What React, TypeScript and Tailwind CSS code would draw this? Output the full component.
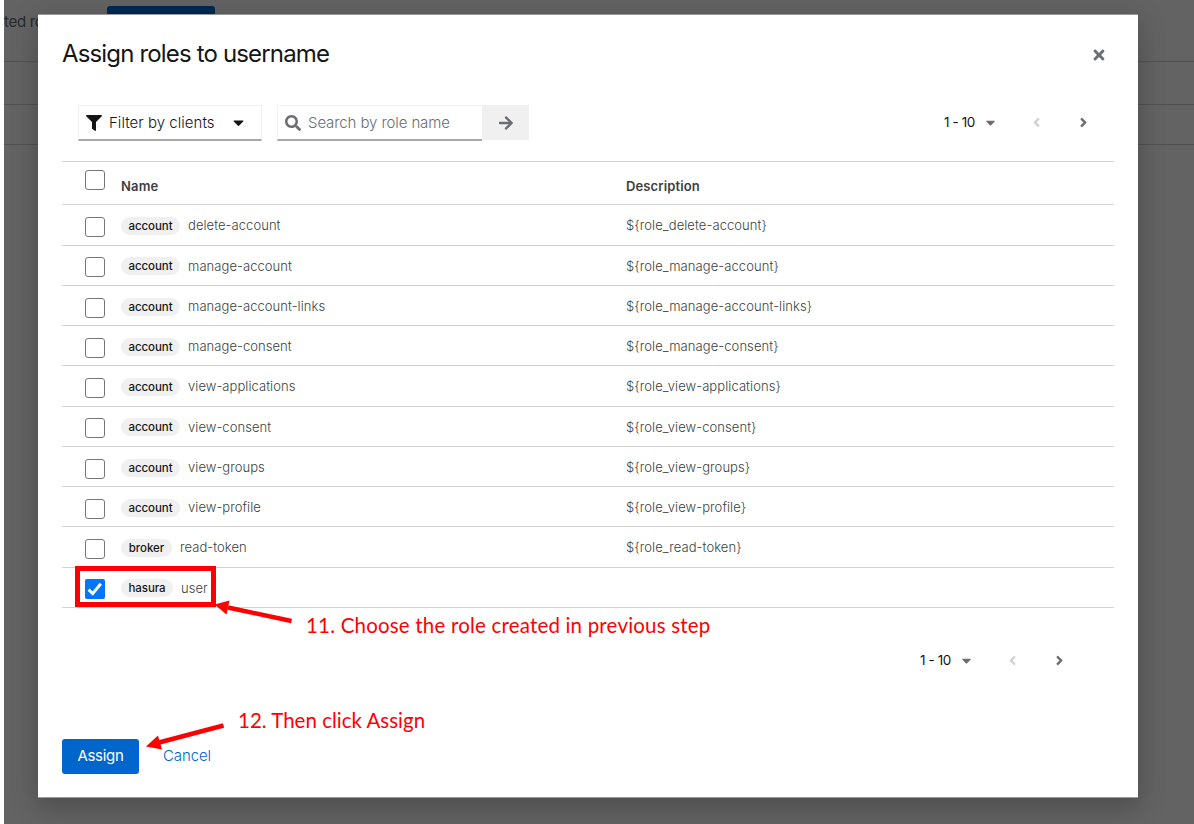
import { FaAngleLeft, FaAngleRight, FaArrowRight, FaCaretDown, FaFilter, FaSearch, FaTimes } from "react-icons/fa";

type Role = { client: string; name: string; description?: string; checked?: boolean };

const roles: Role[] = [
  { client: "account", name: "delete-account", description: "${role_delete-account}" },
  { client: "account", name: "manage-account", description: "${role_manage-account}" },
  { client: "account", name: "manage-account-links", description: "${role_manage-account-links}" },
  { client: "account", name: "manage-consent", description: "${role_manage-consent}" },
  { client: "account", name: "view-applications", description: "${role_view-applications}" },
  { client: "account", name: "view-consent", description: "${role_view-consent}" },
  { client: "account", name: "view-groups", description: "${role_view-groups}" },
  { client: "account", name: "view-profile", description: "${role_view-profile}" },
  { client: "broker", name: "read-token", description: "${role_read-token}" },
  { client: "hasura", name: "user", checked: true },
];

const badgeWidths: Record<string, string> = {
  account: "w-[59px]",
  broker: "w-[51px]",
  hasura: "w-[52px]",
};

function Checkbox({ checked = false }: { checked?: boolean }) {
  return checked ? (
    <span className="flex size-5 shrink-0 items-center justify-center rounded-[2px] bg-[#0075ff]">
      <svg viewBox="0 0 20 20" className="size-5" fill="none" stroke="white" strokeWidth="3">
        <path d="M3.6 10.6 7.7 14.6 15.8 4.8" />
      </svg>
    </span>
  ) : (
    <span className="block size-5 shrink-0 rounded-[3px] border border-[#767676] bg-white" />
  );
}

function Pagination() {
  return (
    <div className="flex h-6 items-center text-[#6a6e73]">
      <span className="w-8 whitespace-nowrap text-[13.5px] tracking-[-0.4px] text-[#151515]">1 - 10</span>
      <FaCaretDown className="ml-[7px] size-[15px]" />
      <FaAngleLeft className="ml-[31px] size-[15px] text-[#d2d2d2]" />
      <FaAngleRight className="ml-[32px] size-[15px]" />
    </div>
  );
}

export default function App() {
  return (
    <div className="relative flex h-[824px] w-[1194px] overflow-hidden bg-white pl-1 font-[Inter,sans-serif]">
      <div className="relative flex-1 bg-[#636363]">
        <div className="flex h-[62px] border-b border-[#505050]">
          <span className="mt-[12px] w-[103px] whitespace-nowrap text-[15px] leading-5 tracking-[-0.3px] text-[#292929]">ted roles</span>
          <span className="mt-[6px] h-9 w-[108px] rounded-[3px] bg-[#002952]" />
        </div>
        <div className="h-[43px] border-b border-[#505050]" />
        <div className="h-[40px] border-b border-[#505050]" />
      </div>

      <section className="absolute left-[38px] top-[14px] flex h-[784px] w-[1100px] flex-col border-y border-[#999] bg-white px-6 shadow-[0_8px_24px_2px_rgba(0,0,0,0.22)]">
        <header className="flex h-[78px] items-center justify-between">
          <h1 className="whitespace-nowrap text-[24px] leading-8 tracking-[-0.84px] text-[#151515]">Assign roles to username</h1>
          <FaTimes className="mr-[7px] mt-[2px] size-[16px] text-[#6a6e73]" />
        </header>

        <div className="flex h-[68px] items-start pl-4 pt-[12px]">
          <button className="flex h-9 w-[184px] items-center border border-b-2 border-[#f0f0f0] border-b-[#a8a8a8] pl-[7px] text-[15px] font-light text-[#151515]">
            <FaFilter className="size-4" />
            <span className="ml-[7px] mt-[1px] whitespace-nowrap tracking-[0.03px]">Filter by clients</span>
            <FaCaretDown className="ml-[15px] size-[17px]" />
          </button>
          <div className="ml-[15px] flex">
            <div className="flex h-9 w-[205px] items-center border border-r-0 border-b-2 border-[#f0f0f0] border-b-[#a8a8a8] pl-[7px]">
              <FaSearch className="size-4 text-[#6a6e73]" />
              <span className="ml-[7px] mt-[1px] whitespace-nowrap text-[15px] font-light tracking-[-0.1px] text-[#6a6e73]">Search by role name</span>
            </div>
            <button className="flex h-[35px] w-[47px] items-center justify-center bg-[#f0f0f0] text-[#6a6e73]">
              <FaArrowRight className="size-4" />
            </button>
          </div>
          <div className="ml-auto mr-[23px] mt-[5px]">
            <Pagination />
          </div>
        </div>

        <div className="border-t border-[#d2d2d2] text-[13px] tracking-[0.06px]">
          <div className="flex h-[43.4px] border-b border-[#d2d2d2] pl-[23px] font-semibold text-[#3c3f42]">
            <div className="mt-[8px]"><Checkbox /></div>
            <span className="ml-[16px] mt-[14px] w-[505px] leading-5 tracking-[0.15px]">Name</span>
            <span className="mt-[14px] leading-5 tracking-[0.12px]">Description</span>
          </div>
          {roles.map((role) => (
            <div key={role.name} className="flex h-[40.26px] items-center border-b border-[#d2d2d2] pl-[23px] text-[#3c3f42]">
              <div className="mt-[4px]"><Checkbox checked={role.checked} /></div>
              <div className="ml-[16px] mt-[2px] flex w-[505px] items-center">
                <span className={`${badgeWidths[role.client]} h-[18px] rounded-full bg-[#f0f0f0] text-center text-[11.5px] font-medium leading-[18px] tracking-[-0.05px] text-[#151515]`}>{role.client}</span>
                <span className="ml-[8px] whitespace-nowrap font-light">{role.name}</span>
              </div>
              <span className="mt-[2px] whitespace-nowrap font-light tracking-[0.08px]">{role.description}</span>
            </div>
          ))}
        </div>

        <div className="mt-[40.7px] flex justify-end pr-[47px]"><Pagination /></div>

        <footer className="mt-[66px] flex items-center text-[15px]">
          <button className="h-[35px] w-[77px] rounded-[3px] bg-[#0066cc] tracking-[-0.3px] text-white">Assign</button>
          <button className="ml-[24px] font-light tracking-[-0.1px] text-[#0066cc]">Cancel</button>
        </footer>
      </section>

      <div className="absolute left-[75px] top-[566px] h-[41px] w-[141px] border-[5px] border-[#ff0000]" />
      <svg className="absolute left-0 top-0 h-[824px] w-[1194px]" fill="#ff0000" stroke="#ff0000">
        <path d="M291.5 621 228 607.5" strokeWidth="4.5" />
        <path d="M214.5 604.5 229.5 600.5 226.5 614.5Z" stroke="none" />
        <path d="M223.5 725.5 159 742.5" strokeWidth="4.5" />
        <path d="M146 746.5 158 735.5 162 749.5Z" stroke="none" />
      </svg>
      <p className="absolute left-[306px] top-[611px] whitespace-nowrap font-[Lato,sans-serif] text-[20.5px] leading-7 tracking-[0.19px] text-[#ff0000]">11. Choose the role created in previous step</p>
      <p className="absolute left-[238px] top-[706px] whitespace-nowrap font-[Lato,sans-serif] text-[20.5px] leading-7 text-[#ff0000]">12. Then click Assign</p>
    </div>
  );
}
